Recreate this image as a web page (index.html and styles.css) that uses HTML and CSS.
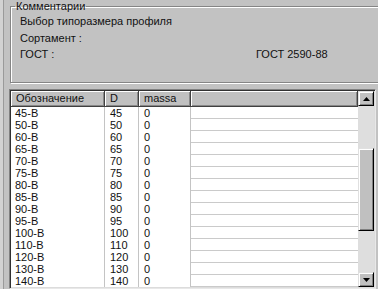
FILE: index.html
```html
<!DOCTYPE html>
<html lang="ru">
<head>
<meta charset="utf-8">
<title>Выбор типоразмера профиля</title>
<link rel="stylesheet" href="styles.css">
</head>
<body>
<div class="window">
  <div class="edge"></div>
  <div class="main">
    <fieldset class="group">
      <legend class="legend">Комментарии</legend>
      <div class="comments">
        <div class="full">Выбор типоразмера профиля</div>
        <div>Сортамент :</div><div></div>
        <div>ГОСТ :</div><div>ГОСТ 2590-88</div>
      </div>
    </fieldset>
    <div class="grid">
      <div class="table">
        <div class="head">
          <div class="hc c1">Обозначение</div>
          <div class="hc c2">D</div>
          <div class="hc c3">massa</div>
          <div class="hc c4"></div>
        </div>
        <div class="rows">
          <div class="row"><div class="c c1">45-В</div><div class="c c2">45</div><div class="c c3">0</div><div class="c c4"></div></div>
          <div class="row"><div class="c c1">50-В</div><div class="c c2">50</div><div class="c c3">0</div><div class="c c4"></div></div>
          <div class="row"><div class="c c1">60-В</div><div class="c c2">60</div><div class="c c3">0</div><div class="c c4"></div></div>
          <div class="row"><div class="c c1">65-В</div><div class="c c2">65</div><div class="c c3">0</div><div class="c c4"></div></div>
          <div class="row"><div class="c c1">70-В</div><div class="c c2">70</div><div class="c c3">0</div><div class="c c4"></div></div>
          <div class="row"><div class="c c1">75-В</div><div class="c c2">75</div><div class="c c3">0</div><div class="c c4"></div></div>
          <div class="row"><div class="c c1">80-В</div><div class="c c2">80</div><div class="c c3">0</div><div class="c c4"></div></div>
          <div class="row"><div class="c c1">85-В</div><div class="c c2">85</div><div class="c c3">0</div><div class="c c4"></div></div>
          <div class="row"><div class="c c1">90-В</div><div class="c c2">90</div><div class="c c3">0</div><div class="c c4"></div></div>
          <div class="row"><div class="c c1">95-В</div><div class="c c2">95</div><div class="c c3">0</div><div class="c c4"></div></div>
          <div class="row"><div class="c c1">100-В</div><div class="c c2">100</div><div class="c c3">0</div><div class="c c4"></div></div>
          <div class="row"><div class="c c1">110-В</div><div class="c c2">110</div><div class="c c3">0</div><div class="c c4"></div></div>
          <div class="row"><div class="c c1">120-В</div><div class="c c2">120</div><div class="c c3">0</div><div class="c c4"></div></div>
          <div class="row"><div class="c c1">130-В</div><div class="c c2">130</div><div class="c c3">0</div><div class="c c4"></div></div>
          <div class="row"><div class="c c1">140-В</div><div class="c c2">140</div><div class="c c3">0</div><div class="c c4"></div></div>
        </div>
      </div>
      <div class="scrollbar">
        <div class="sbtn"><svg width="7" height="4" viewBox="0 0 7 4"><path d="M3.5 0 L7 4 L0 4 Z" fill="#000"/></svg></div>
        <div class="track track-top"></div>
        <div class="thumb"></div>
        <div class="track track-bottom"></div>
        <div class="sbtn"><svg width="7" height="4" viewBox="0 0 7 4"><path d="M0 0 L7 0 L3.5 4 Z" fill="#000"/></svg></div>
      </div>
    </div>
  </div>
</div>
</body>
</html>
```
FILE: styles.css
```css
html, body {
  margin: 0;
  padding: 0;
  background: #c0c0c0;
}

body {
  font-family: "Liberation Sans", Arial, sans-serif;
  font-size: 11px;
  color: #000;
}

.window {
  width: 378px;
  height: 289px;
  overflow: hidden;
  display: flex;
  background: #c2c2c2;
}

.edge {
  width: 9px;
  flex: none;
  display: flex;
}

.edge::before {
  content: "";
  width: 3px;
  background: #d2d2d2;
}

.edge::after {
  content: "";
  width: 1px;
  background: #9a9a9a;
}

.main {
  flex: 1;
  min-width: 0;
  display: flex;
  flex-direction: column;
}

/* Group box */
.group {
  margin: 0 -30px 0 1px;
  padding: 0;
  border: 1px solid #858585;
  box-shadow: inset 1px 1px 0 #fff, 1px 1px 0 #fff;
  min-width: 0;
}

.legend {
  margin-left: 4px;
  padding: 0 1px;
  line-height: 13px;
  color: #111;
}

.comments {
  display: grid;
  grid-template-columns: 236px auto;
  line-height: 16.5px;
  padding: 0 0 19.5px 9px;
  color: #111;
}

.comments .full {
  grid-column: 1 / -1;
}

/* Grid */
.grid {
  margin: 6px 2px 0 0;
  height: 200px;
  flex: none;
  box-sizing: border-box;
  display: flex;
  border: 1px solid;
  border-color: #808080 #e8e8e8 #e8e8e8 #808080;
  box-shadow: inset 1px 1px 0 #303030, inset -1px -1px 0 #dcdcdc;
  padding: 1px;
  background: #fff;
}

.table {
  flex: 1;
  min-width: 0;
  display: flex;
  flex-direction: column;
  overflow: hidden;
}

.head {
  display: flex;
  height: 16px;
  flex: none;
}

.hc {
  box-sizing: border-box;
  height: 16px;
  line-height: 15px;
  padding-left: 5px;
  background: #c0c0c0;
  border-right: 1px solid #404040;
  border-bottom: 1px solid #404040;
  box-shadow: inset 1px 1px 0 #fff, inset -1px -1px 0 #888;
  white-space: nowrap;
  color: #111;
}

.c1 { width: 94px; flex: none; box-sizing: border-box; }
.c2 { width: 34px; flex: none; box-sizing: border-box; }
.c3 { width: 52px; flex: none; box-sizing: border-box; }
.c4 { flex: 1; min-width: 0; box-sizing: border-box; }

.rows {
  display: flex;
  flex-direction: column;
}

.row {
  display: flex;
  height: 12px;
  flex: none;
}

.c {
  height: 12px;
  line-height: 13px;
  padding-left: 4px;
  border-right: 1px solid #c4c4c4;
  white-space: nowrap;
  color: #111;
}

.row .c2,
.row .c3 {
  padding-left: 5px;
}

.row .c4 {
  border-right: none;
  border-bottom: 1px solid #cacaca;
}

/* Scrollbar */
.scrollbar {
  width: 16px;
  flex: none;
  display: flex;
  flex-direction: column;
}

.sbtn {
  height: 15px;
  flex: none;
  box-sizing: border-box;
  background: #c0c0c0;
  border: 1px solid;
  border-color: #e0e0e0 #000 #000 #e0e0e0;
  box-shadow: inset 1px 1px 0 #fff, inset -1px -1px 0 #808080;
  display: flex;
  align-items: center;
  justify-content: center;
}

.track {
  background: #dedede;
}

.track-top {
  height: 42px;
  flex: none;
}

.thumb {
  height: 83px;
  flex: none;
  box-sizing: border-box;
  background: #c0c0c0;
  border: 1px solid;
  border-color: #e0e0e0 #000 #000 #e0e0e0;
  box-shadow: inset 1px 1px 0 #fff, inset -1px -1px 0 #808080;
}

.track-bottom {
  flex: 1;
}
```
